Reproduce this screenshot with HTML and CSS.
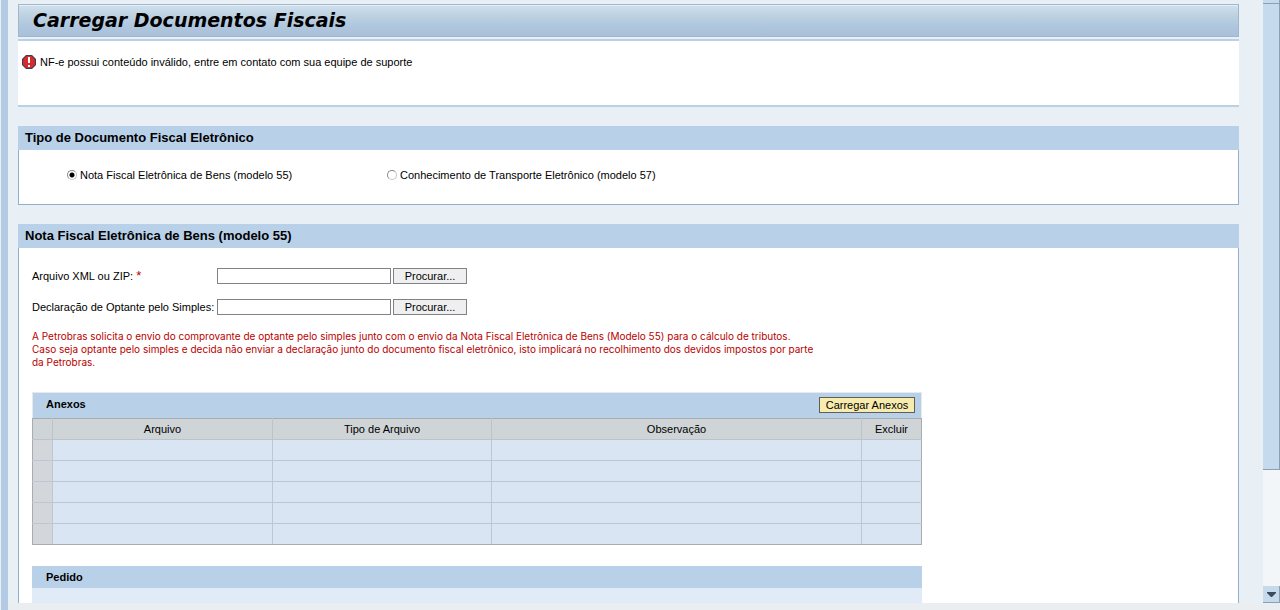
FILE: index.html
```html
<!DOCTYPE html>
<html lang="pt-BR">
<head>
<meta charset="utf-8">
<title>Carregar Documentos Fiscais</title>
<link rel="stylesheet" href="styles.css">
</head>
<body>
<div class="frame">
  <div class="view">
    <main class="content">
      <h1 class="title">Carregar Documentos Fiscais</h1>
      <div class="message" role="alert">
        <svg class="message-icon" viewBox="0 0 14 14" aria-hidden="true">
          <path d="M4 0h6l4 4v6l-4 4H4l-4-4V4z" fill="#3a3f4e"/>
          <path d="M4.400 1h5.200L13 4.400v5.200L9.600 13H4.400L1 9.600V4.400z" fill="#d62a2e"/>
          <path d="M6 2h2v6H6zM6 10h2v2H6z" fill="#fff"/>
        </svg>
        <span>NF-e possui conteúdo inválido, entre em contato com sua equipe de suporte</span>
      </div>

      <section class="panel">
        <h2 class="panel-title">Tipo de Documento Fiscal Eletrônico</h2>
        <div class="panel-body types">
          <label class="type"><input class="radio" type="radio" name="tipo" checked>Nota Fiscal Eletrônica de Bens (modelo 55)</label>
          <label class="type"><input class="radio" type="radio" name="tipo">Conhecimento de Transporte Eletrônico (modelo 57)</label>
        </div>
      </section>

      <section class="panel">
        <h2 class="panel-title">Nota Fiscal Eletrônica de Bens (modelo 55)</h2>
        <div class="panel-body form">
          <div class="field">
            <label class="field-label" for="xml">Arquivo XML ou ZIP: <span class="required">*</span></label>
            <input class="field-input" id="xml" type="text">
            <button class="browse" type="button">Procurar...</button>
          </div>
          <div class="field">
            <label class="field-label" for="decl">Declaração de Optante pelo Simples:</label>
            <input class="field-input" id="decl" type="text">
            <button class="browse" type="button">Procurar...</button>
          </div>
          <p class="warning">A Petrobras solicita o envio do comprovante de optante pelo simples junto com o envio da Nota Fiscal Eletrônica de Bens (Modelo 55) para o cálculo de tributos.<br>Caso seja optante pelo simples e decida não enviar a declaração junto do documento fiscal eletrônico, isto implicará no recolhimento dos devidos impostos por parte<br>da Petrobras.</p>

          <div class="attachments">
            <div class="bar">
              <h3 class="bar-title">Anexos</h3>
              <button class="upload" type="button">Carregar Anexos</button>
            </div>
            <table class="grid">
              <colgroup><col class="c-sel"><col class="c-file"><col class="c-type"><col class="c-note"><col class="c-del"></colgroup>
              <thead><tr><th></th><th>Arquivo</th><th>Tipo de Arquivo</th><th>Observação</th><th>Excluir</th></tr></thead>
              <tbody>
                <tr><td></td><td></td><td></td><td></td><td></td></tr>
                <tr><td></td><td></td><td></td><td></td><td></td></tr>
                <tr><td></td><td></td><td></td><td></td><td></td></tr>
                <tr><td></td><td></td><td></td><td></td><td></td></tr>
                <tr><td></td><td></td><td></td><td></td><td></td></tr>
              </tbody>
            </table>
          </div>

          <div class="order">
            <h3 class="order-title">Pedido</h3>
            <div class="order-body"></div>
          </div>
        </div>
      </section>
    </main>
    <div class="scrollbar" aria-hidden="true">
      <div class="scroll-up"></div>
      <div class="scroll-thumb"></div>
      <div class="scroll-track"></div>
      <div class="scroll-down"><svg class="arrow" viewBox="0 0 9 5"><path d="M0 0h9v1L5 5H4L0 1z" fill="#3b4a62"/></svg></div>
    </div>
  </div>
  <div class="footer"></div>
</div>
</body>
</html>
```
FILE: styles.css
```css
* { box-sizing: border-box; }
body {
  margin: 0;
  background: #e8f0f6;
  color: #000;
  font: 11px/14px "Liberation Sans", Arial, sans-serif;
}
h1, h2, h3, p { margin: 0; }
button, input { font: inherit; color: inherit; margin: 0; }

.frame {
  display: flex;
  flex-direction: column;
  height: 100vh;
  margin-left: 1px;
  border-left: 7px solid #b2cae3;
  overflow: hidden;
}
.view { display: flex; flex: 1; min-height: 0; }
.content { flex: 1; min-width: 0; padding: 4px 24px 0 10px; overflow: hidden; }
.footer { flex: none; height: 7px; background: #eaeef1; }

.title {
  height: 33px;
  padding-left: 14px;
  border: 1px solid #a3b7cc;
  box-shadow: inset 0 1px #e4eef6;
  background: linear-gradient(#d0e1ee, #bdd1e0 35%, #b0c8df 65%, #a9c0d8);
  font: italic bold 19px/31px Verdana, "DejaVu Sans", sans-serif;
}
.message {
  display: flex;
  align-items: flex-start;
  gap: 4px;
  height: 68px;
  margin: 2px 0 19px;
  padding: 14px 4px;
  border: solid #b9d1e7;
  border-width: 2px 0;
  background: #fff;
}
.message-icon { flex: none; width: 14px; height: 14px; }

.panel { margin-bottom: 19px; }
.panel-title {
  padding: 0 7px;
  background: #b9d1e8;
  font-size: 13px;
  line-height: 24px;
}
.panel-body { border: 1px solid #8fb1cf; border-top: 0; background: #fff; }

.types { display: flex; padding: 18px 48px 22px; }
.type { display: flex; align-items: center; gap: 3px; width: 320px; height: 14px; white-space: nowrap; }
.radio {
  appearance: none;
  width: 10px;
  height: 10px;
  border: 1px solid #8a8a8a;
  border-right-color: #c4c4c4;
  border-bottom-color: #c4c4c4;
  border-radius: 50%;
  background: #fff;
}
.radio:checked { background: radial-gradient(circle, #000 0 2px, #fff 3px); }

.form { padding: 20px 13px; }
.field { display: flex; align-items: center; gap: 2px; height: 16px; margin-bottom: 15px; }
.field-label { width: 183px; white-space: nowrap; }
.required { color: #c00000; font-size: 13px; line-height: 1; }
.field-input { width: 174px; height: 16px; padding: 0 2px; border: 1px solid #7f8286; background: #fff; }
.browse {
  width: 74px;
  height: 16px;
  padding: 0;
  border: 1px solid #7f8286;
  background: #efefef;
  line-height: 14px;
}
.warning { color: #b80000; font-family: Inter, "Liberation Sans", sans-serif; font-size: 10px; line-height: 13px; white-space: nowrap; }

.attachments, .order { max-width: 890px; }
.attachments { margin: 23px 0 21px; }
.bar {
  display: flex;
  justify-content: space-between;
  align-items: flex-start;
  height: 26px;
  padding: 4px 6px 0 13px;
  border: 1px solid #e6e9ed;
  border-bottom: 0;
  background: #b9d1e8;
}
.bar-title, .order-title { font-size: 11px; }
.upload {
  width: 96px;
  height: 16px;
  padding: 0;
  border: 1px solid #5f5f58;
  background: #f8ebae;
  line-height: 14px;
}
.grid { width: 100%; table-layout: fixed; border-collapse: collapse; border: 1px solid #a9abae; }
.c-sel { width: 20px; }
.c-file { width: 220px; }
.c-type { width: 219px; }
.c-note { width: 370px; }
.c-del { width: 60px; }
.grid th, .grid td { height: 21px; padding: 0; }
.grid th { border: 1px solid #bcc3cc; background: #cfd4d7; font-weight: normal; }
.grid td { border: 1px solid #bec6d3; background: #d9e5f3; }
.grid td:first-child { background: #d3d7dc; }
.grid tr > :first-child { border-left-color: #a9abae; }
.grid tr > :last-child { border-right-color: #a9abae; }
.grid thead th { border-top-color: #a9abae; }
.grid tr:last-child td { border-bottom-color: #a9abae; }

.order-title { padding: 0 14px; background: #b9d1e8; line-height: 22px; }
.order-body { height: 120px; background: #e1ebf7; }

.scrollbar { display: flex; flex-direction: column; flex: none; width: 17px; background: #f2f6f9; }
.scroll-up, .scroll-thumb, .scroll-down {
  border: solid #8aa0b6;
  border-width: 0 1px 1px 0;
  background: #c5daea;
}
.scroll-up { flex: none; height: 4px; }
.scroll-thumb { flex: 466; }
.scroll-track { flex: 116; }
.scroll-down { display: flex; flex: none; align-items: center; justify-content: center; height: 17px; }
.arrow { width: 9px; height: 5px; }
```
